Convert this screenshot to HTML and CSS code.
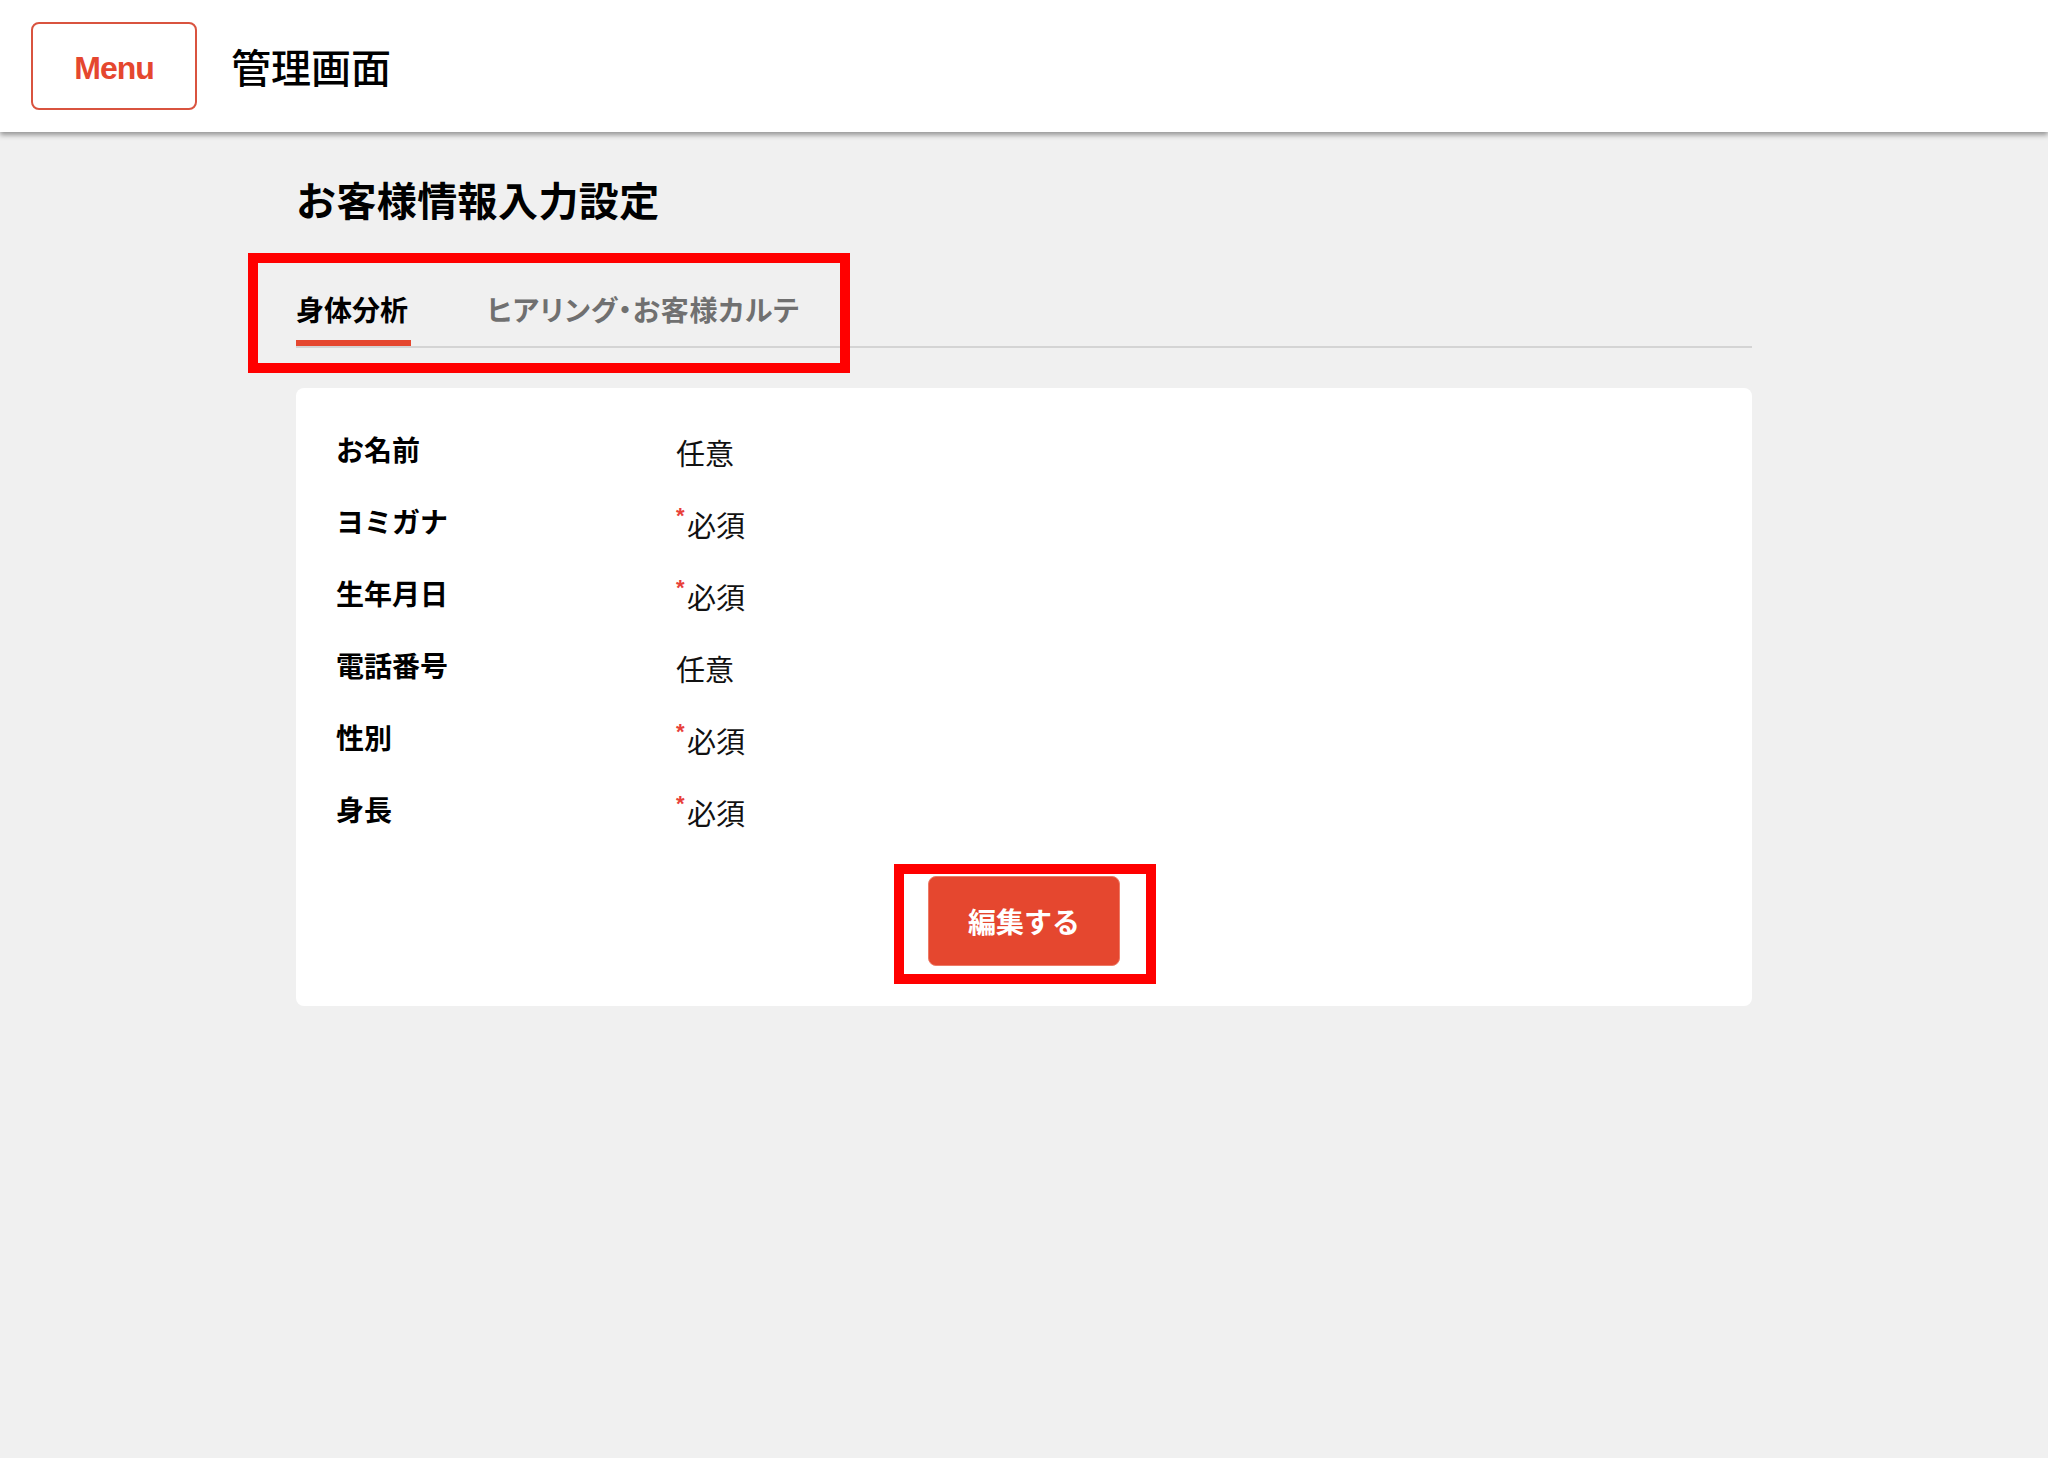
FILE: index.html
```html
<!DOCTYPE html>
<html lang="ja">
<head>
<meta charset="utf-8">
<title>管理画面</title>
<link rel="stylesheet" href="styles.css">
</head>
<body>
<header class="topbar">
  <button class="menu-btn" type="button">Menu</button>
  <h1 class="app-title">管理画面</h1>
</header>
<main class="page">
  <h2 class="page-title">お客様情報入力設定</h2>
  <nav class="tabs">
    <span class="tab tab-active">身体分析</span>
    <span class="tab tab-muted">ヒアリング・お客様カルテ</span>
    <span class="note-frame note-frame-tabs"></span>
  </nav>
  <section class="card">
    <div class="rows">
      <div class="row"><span class="label">お名前</span><span class="value">任意</span></div>
      <div class="row"><span class="label">ヨミガナ</span><span class="value"><span class="req">*</span>必須</span></div>
      <div class="row"><span class="label">生年月日</span><span class="value"><span class="req">*</span>必須</span></div>
      <div class="row"><span class="label">電話番号</span><span class="value">任意</span></div>
      <div class="row"><span class="label">性別</span><span class="value"><span class="req">*</span>必須</span></div>
      <div class="row"><span class="label">身長</span><span class="value"><span class="req">*</span>必須</span></div>
    </div>
    <div class="actions">
      <div class="btn-wrap">
        <button class="edit-btn" type="button">編集する</button>
        <span class="note-frame note-frame-btn"></span>
      </div>
    </div>
  </section>
</main>
</body>
</html>
```
FILE: styles.css
```css
html, body {
  margin: 0;
  padding: 0;
}
body {
  background: #f0f0f0;
  font-family: "Liberation Sans", "Noto Sans CJK JP", sans-serif;
  color: #000;
  min-height: 1458px;
}
.topbar {
  position: relative;
  z-index: 1;
  height: 132px;
  background: #fff;
  display: flex;
  align-items: center;
  padding-left: 31px;
  box-shadow: 0 3px 5px rgba(0, 0, 0, 0.38);
}
.menu-btn {
  box-sizing: border-box;
  width: 166px;
  height: 88px;
  background: #fff;
  border: 2px solid #d9533f;
  border-radius: 8px;
  color: #e5472f;
  font-family: "Liberation Sans", sans-serif;
  font-weight: 700;
  font-size: 32px;
  letter-spacing: -1px;
  display: flex;
  align-items: center;
  justify-content: center;
  padding: 4px 0 0;
}
.app-title {
  margin: 0 0 0 34px;
  font-family: "Noto Sans CJK JP", sans-serif;
  font-size: 40px;
  font-weight: 500;
  line-height: 48px;
}
.page {
  width: 1456px;
  margin: 0 auto;
  padding-top: 43px;
}
.page-title {
  margin: 0;
  font-family: "Noto Sans CJK JP", sans-serif;
  font-size: 40px;
  font-weight: 700;
  line-height: 48px;
  letter-spacing: 0.4px;
}
.tabs {
  position: relative;
  margin-top: 68px;
  display: flex;
  align-items: flex-end;
  gap: 76px;
  border-bottom: 2px solid #d4d4d4;
}
.tab {
  font-family: "Noto Sans CJK JP", sans-serif;
  font-size: 28px;
  font-weight: 700;
  line-height: 36px;
  padding: 0 3px 13px 0;
  border-bottom: 6px solid transparent;
}
.tab-active {
  color: #000;
  border-bottom-color: #e5472f;
}
.tab-muted {
  color: #707070;
  font-feature-settings: "palt";
  letter-spacing: 0.8px;
}
.note-frame {
  position: absolute;
  box-sizing: border-box;
  border: 10px solid #ff0000;
  pointer-events: none;
}
.note-frame-tabs {
  left: -48px;
  top: -38px;
  width: 602px;
  height: 120px;
}
.card {
  margin-top: 40px;
  background: #fff;
  border-radius: 8px;
  padding: 28px 40px 40px;
}
.row {
  display: grid;
  grid-template-columns: 340px 1fr;
  align-items: center;
  height: 72px;
}
.label {
  font-family: "Noto Sans CJK JP", sans-serif;
  font-size: 28px;
  font-weight: 700;
  line-height: 36px;
  padding-bottom: 6px;
}
.value {
  font-family: "Noto Sans CJK JP", sans-serif;
  font-size: 29px;
  font-weight: 400;
  line-height: 36px;
  color: #111;
}
.req {
  display: inline-block;
  color: #e8403a;
  font-family: "Liberation Sans", sans-serif;
  font-size: 22px;
  font-weight: 700;
  line-height: 22px;
  vertical-align: top;
  width: 11px;
  margin-top: -1px;
}
.actions {
  display: flex;
  justify-content: center;
  margin-top: 28px;
}
.btn-wrap {
  position: relative;
}
.edit-btn {
  box-sizing: border-box;
  width: 192px;
  height: 90px;
  background: #e5472f;
  border: 1px solid #ee7a66;
  border-radius: 8px;
  color: #fff;
  font-family: "Noto Sans CJK JP", sans-serif;
  font-size: 28px;
  font-weight: 700;
  display: flex;
  align-items: center;
  justify-content: center;
  padding: 0;
}
.note-frame-btn {
  left: -34px;
  top: -12px;
  width: 262px;
  height: 120px;
}
```
